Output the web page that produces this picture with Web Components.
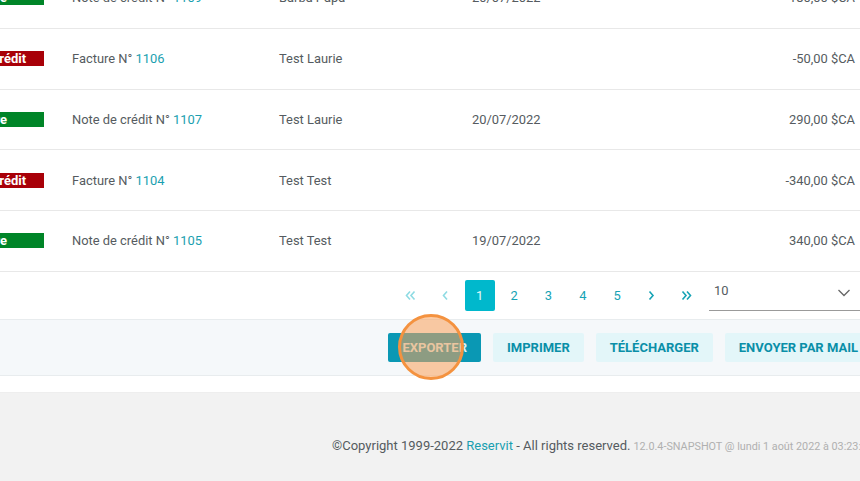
<!DOCTYPE html>
<html lang="fr">
<head>
<meta charset="utf-8">
<title>Factures</title>
<style>
  html, body { margin: 0; height: 100%; overflow: hidden; background: #fff; }
  body { font-family: Roboto, "Liberation Sans", sans-serif; }
</style>
</head>
<body>
<invoice-page>
  <invoice-row badge="Facture" tone="green" label="Note de crédit N°" num="1109" client="Barba Papa" date="20/07/2022" amount="180,00 $CA"></invoice-row>
  <invoice-row badge="Note de crédit" tone="red" label="Facture N°" num="1106" client="Test Laurie" amount="-50,00 $CA"></invoice-row>
  <invoice-row badge="Facture" tone="green" label="Note de crédit N°" num="1107" client="Test Laurie" date="20/07/2022" amount="290,00 $CA"></invoice-row>
  <invoice-row badge="Note de crédit" tone="red" label="Facture N°" num="1104" client="Test Test" amount="-340,00 $CA"></invoice-row>
  <invoice-row badge="Facture" tone="green" label="Note de crédit N°" num="1105" client="Test Test" date="19/07/2022" amount="340,00 $CA"></invoice-row>
  <page-nav slot="nav"></page-nav>
  <action-bar slot="actions">
    <action-button primary>EXPORTER</action-button>
    <action-button>IMPRIMER</action-button>
    <action-button>TÉLÉCHARGER</action-button>
    <action-button>ENVOYER PAR MAIL</action-button>
  </action-bar>
  <page-footer slot="footer"></page-footer>
</invoice-page>

<script>
class InvoicePage extends HTMLElement {
  constructor() {
    super();
    this.attachShadow({ mode: 'open' });
    this.shadowRoot.innerHTML = `
      <style>
        :host { display: block; width: 860px; height: 481px; overflow: hidden; position: relative; }
        .rows { margin-top: -32px; }
        .click {
          position: absolute; left: 398px; top: 314px; width: 66px; height: 66px;
          box-sizing: border-box; border-radius: 50%;
          border: 3px solid #f4923f; background: rgba(250, 160, 90, 0.55);
        }
      </style>
      <div class="rows"><slot></slot></div>
      <slot name="nav"></slot>
      <slot name="actions"></slot>
      <slot name="footer"></slot>
      <div class="click"></div>
    `;
  }
}

class InvoiceRow extends HTMLElement {
  constructor() {
    super();
    this.attachShadow({ mode: 'open' });
  }

  connectedCallback() {
    this.shadowRoot.innerHTML = `
      <style>
        :host {
          display: grid; grid-template-columns: 44px 235px 193px 1fr auto;
          align-items: center; height: 60.75px; box-sizing: border-box;
          border-bottom: 1px solid #e8e8e8; padding-right: 5px;
          font-size: 12.9px; color: #555b60;
        }
        .badge {
          justify-self: end; width: 118px; height: 15px; line-height: 15px;
          font-size: 13px; font-weight: 700; color: #fff; white-space: nowrap;
          text-align: center;
        }
        .green { background: #008528; }
        .red { background: #a80008; }
        .doc { padding-left: 28px; }
        .num { color: #1a9fb0; }
      </style>
      <div class="badge ${this.getAttribute('tone')}">${this.getAttribute('badge')}</div>
      <div class="doc">${this.getAttribute('label')} <span class="num">${this.getAttribute('num')}</span></div>
      <div>${this.getAttribute('client')}</div>
      <div>${this.getAttribute('date') || ''}</div>
      <div>${this.getAttribute('amount')}</div>
    `;
  }
}

class PageNav extends HTMLElement {
  constructor() {
    super();
    this.attachShadow({ mode: 'open' });
    const chevron = (dir, double) => {
      const d = dir === 'l' ? 'M5 1.5 1.5 5.5 5 9.5' : 'M1.5 1.5 5 5.5 1.5 9.5';
      const d2 = dir === 'l' ? 'M9.5 1.5 6 5.5l3.5 4' : 'M6 1.5l3.5 4L6 9.5';
      const w = double ? 11 : 6.5;
      return `<svg width="${w}" height="11" viewBox="0 0 ${w} 11" fill="none" stroke="currentColor" stroke-width="1.6"><path d="${d}"/>${double ? `<path d="${d2}"/>` : ''}</svg>`;
    };
    this.shadowRoot.innerHTML = `
      <style>
        :host {
          display: flex; align-items: center; justify-content: flex-end;
          height: 47px; box-sizing: border-box; font-size: 12.9px;
        }
        .pages { display: flex; align-items: center; margin-right: 3.6px; }
        .p {
          width: 30px; height: 31px; margin-right: 4.4px; border-radius: 2px; color: #16a3b5;
          display: flex; align-items: center; justify-content: center;
        }
        .off { color: #8fdbe3; }
        .on { background: #00b8cc; color: #e8f8fa; }
        .size {
          width: 151px; height: 32px; box-sizing: border-box; border-bottom: 1px solid #9a9a9a;
          display: flex; justify-content: space-between; align-items: center;
          padding: 0 9px 9px 5px; color: #555b60;
        }
        .size svg { color: #666; margin-top: 6px; }
      </style>
      <div class="pages">
        <div class="p off">${chevron('l', true)}</div>
        <div class="p off">${chevron('l')}</div>
        <div class="p on">1</div>
        <div class="p">2</div>
        <div class="p">3</div>
        <div class="p">4</div>
        <div class="p">5</div>
        <div class="p">${chevron('r')}</div>
        <div class="p">${chevron('r', true)}</div>
      </div>
      <div class="size">
        <span>10</span>
        <svg width="14" height="8" viewBox="0 0 14 8" fill="none" stroke="currentColor" stroke-width="1.3"><path d="M1.5 1 7 6.5 12.5 1"/></svg>
      </div>
    `;
  }
}

class ActionBar extends HTMLElement {
  constructor() {
    super();
    this.attachShadow({ mode: 'open' });
    this.shadowRoot.innerHTML = `
      <style>
        :host {
          display: flex; align-items: center; gap: 12px; justify-content: flex-end;
          height: 57px; box-sizing: border-box; background: #f5f8fa;
          border-top: 1px solid #e8ecee; border-bottom: 1px solid #e8ecee;
          margin-right: -12px;
        }
      </style>
      <slot></slot>
    `;
  }
}

class ActionButton extends HTMLElement {
  constructor() {
    super();
    this.attachShadow({ mode: 'open' });
    this.shadowRoot.innerHTML = `
      <style>
        :host {
          display: flex; align-items: center; height: 29px; padding: 0 14px;
          border-radius: 2px; background: #e3f6f9; color: #0a8fa8;
          font-size: 13px; font-weight: 700; white-space: nowrap;
        }
        :host([primary]) { background: #0a98b4; color: #d8f2f6; }
      </style>
      <slot></slot>
    `;
  }
}

class PageFooter extends HTMLElement {
  constructor() {
    super();
    this.attachShadow({ mode: 'open' });
    this.shadowRoot.innerHTML = `
      <style>
        :host {
          display: flex; align-items: baseline; white-space: nowrap;
          margin-top: 16px; height: 90px; box-sizing: border-box; padding: 45px 0 0 332px;
          background: #f2f2f2; border-top: 1px solid #eee;
          font-size: 13px; color: #555b60;
        }
        a { color: #1a9fb0; text-decoration: none; }
        small { font-size: 10.8px; color: #b0b0b0; margin-left: 3px; }
      </style>
      <span>©Copyright 1999-2022 <a>Reservit</a> - All rights reserved.</span>
      <small>12.0.4-SNAPSHOT @ lundi 1 août 2022 à 03:23:14</small>
    `;
  }
}

customElements.define('invoice-page', InvoicePage);
customElements.define('invoice-row', InvoiceRow);
customElements.define('page-nav', PageNav);
customElements.define('action-bar', ActionBar);
customElements.define('action-button', ActionButton);
customElements.define('page-footer', PageFooter);
</script>
</body>
</html>
